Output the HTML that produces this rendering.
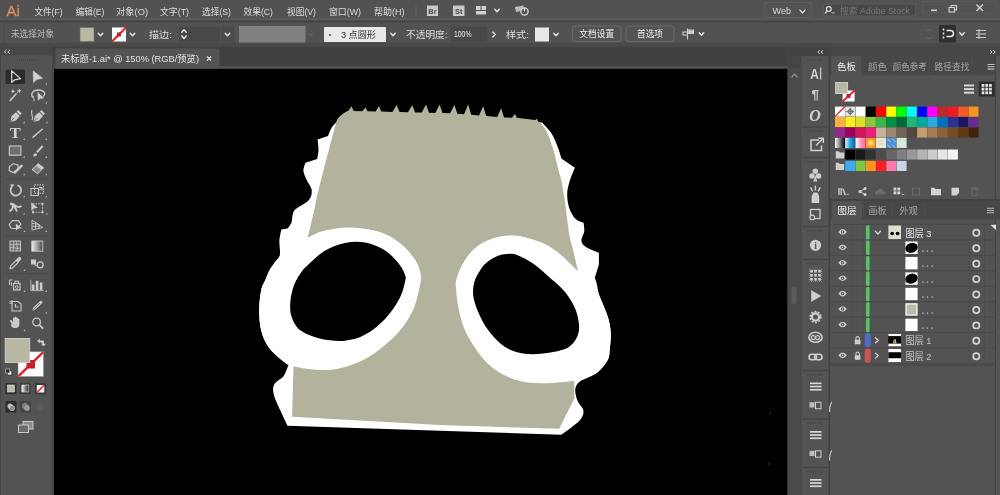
<!DOCTYPE html>
<html><head><meta charset="utf-8"><title>Illustrator</title>
<style>
html,body{margin:0;padding:0;background:#535353;overflow:hidden}
svg{display:block;will-change:transform}
text{font-family:"Liberation Sans", "Noto Sans CJK SC", sans-serif;}
</style></head><body>
<svg width="1000" height="495" viewBox="0 0 1000 495">
<rect x="0" y="0" width="1000" height="495" fill="#535353"/>
<rect x="54" y="68.4" width="733.7" height="427" fill="#000"/>
<path d="M340.0,120.0 C339.1,120.7 336.0,122.5 334.5,124.0 C333.0,125.5 332.1,127.0 331.0,129.0 C329.9,131.0 328.5,134.8 328.0,136.0 L317.6,139.5 C317.8,141.2 318.6,146.8 318.5,150.0 C318.4,153.2 317.4,157.5 317.2,159.0 L305.5,162.7 C305.1,164.0 303.2,167.9 303.4,170.8 C303.6,173.7 305.3,176.8 306.7,180.0 C308.1,183.2 311.4,186.6 311.7,190.0 C312.0,193.4 311.6,196.8 308.7,200.2 C305.8,203.6 297.4,206.6 294.5,210.3 C291.6,214.0 292.7,219.4 291.5,222.4 C290.3,225.4 288.2,227.5 287.5,228.5 L281.4,229.5 C281.1,231.3 279.7,236.0 279.4,240.6 C279.1,245.2 280.9,252.1 279.4,256.8 C277.9,261.5 272.6,265.0 270.3,268.9 C268.0,272.8 266.8,276.4 265.3,280.0 C263.8,283.6 262.2,285.1 261.2,290.2 C260.2,295.3 259.2,303.7 259.2,310.4 C259.2,317.1 259.7,324.5 261.2,330.6 C262.7,336.7 265.1,342.1 268.3,346.8 C271.5,351.5 277.0,355.9 280.4,358.9 C283.8,361.9 287.1,364.0 288.5,365.0 C287.6,366.9 285.8,373.1 283.4,376.3 C281.0,379.5 275.9,381.3 274.3,384.3 C272.7,387.3 272.8,390.0 273.8,394.4 C274.8,398.8 278.1,405.4 280.4,410.6 C282.7,415.8 286.3,423.3 287.5,425.8 L440.0,430.8 L561.2,434.8 C564.2,432.4 575.7,424.7 579.4,420.7 C583.1,416.7 583.7,414.0 583.4,410.6 C583.1,407.2 578.7,404.2 577.4,400.5 C576.1,396.8 574.7,391.8 575.4,388.4 C576.1,385.0 577.7,383.0 581.4,380.3 C585.1,377.6 593.2,375.6 597.6,372.2 C602.0,368.8 605.7,363.8 607.7,360.1 C609.7,356.4 609.2,354.6 609.7,350.0 C610.2,345.4 611.0,338.2 610.7,332.6 C610.4,327.0 609.6,322.6 607.7,316.5 C605.9,310.4 601.8,302.0 599.6,296.3 C597.4,290.6 595.0,286.4 594.5,282.4 C594.0,278.3 595.9,275.0 596.6,272.0 C597.3,269.0 598.4,267.4 598.8,264.2 C599.2,261.0 598.8,254.6 598.8,252.7 C596.6,251.7 588.4,248.7 585.5,246.7 C582.6,244.7 581.6,243.1 581.4,240.6 C581.2,238.1 583.8,234.5 584.2,231.5 C584.6,228.5 583.7,224.2 583.6,222.8 C582.2,222.1 577.8,221.3 575.4,218.8 C573.0,216.3 570.6,212.1 569.2,208.0 C567.8,203.9 567.1,198.5 567.2,194.0 C567.3,189.5 568.5,185.2 569.8,180.8 C571.1,176.4 574.0,170.0 574.8,167.8 L561.4,158.6 C561.0,157.2 559.9,153.1 559.0,150.5 C558.1,147.9 557.2,145.4 556.2,143.0 C555.2,140.6 554.2,138.2 553.0,136.0 C551.8,133.8 550.8,132.3 549.0,130.0 C547.2,127.7 543.2,123.7 542.0,122.4 L340.0,120.0Z" fill="#fff"/>
<path d="M335.5,124.5 C335.8,123.6 336.4,120.7 337.5,119.0 C338.6,117.3 340.5,115.7 342.0,114.5 C343.5,113.3 345.8,112.1 346.5,111.6 L348.4,110.8 L351.6,106.2 L353.6,111.0 L362.3,111.2 L365.5,107.6 L367.5,111.3 L375.6,111.5 L379.0,106.0 L381.2,111.6 L392.4,111.9 L396.6,105.0 L399.6,112.1 L408.0,112.3 L412.2,105.2 L415.2,112.5 L421.8,112.6 L426.0,104.4 L429.0,112.8 L435.4,112.9 L439.6,104.6 L442.6,113.1 L450.2,113.3 L454.4,105.0 L457.4,113.8 L464.0,114.3 L468.2,104.4 L471.2,114.8 L479.0,115.4 L483.2,106.2 L486.2,116.1 L497.2,117.0 L501.2,108.2 L504.0,117.4 L512.0,117.7 L515.0,114.0 L516.8,117.8 L535.0,120.1 L537.2,118.8 L538.2,122.0 L539.5,121.5 C540.1,122.3 541.9,124.3 543.4,126.6 C544.9,128.9 546.7,131.4 548.4,135.4 C550.1,139.4 551.9,144.7 553.6,150.6 C555.3,156.5 557.3,165.8 558.6,170.8 C559.9,175.8 560.3,175.2 561.4,180.8 C562.5,186.4 564.0,195.2 565.3,204.2 C566.6,213.1 568.0,226.8 569.3,234.5 C570.6,242.2 571.9,245.0 573.3,250.7 C574.6,256.4 576.7,265.9 577.4,268.9 L590.0,300.0 L595.0,335.0 L590.0,365.0 L574.3,380.3 L574.3,398.5 L559.2,428.8 L440.0,425.0 L292.1,416.7 L293.5,366.2 L280.0,350.0 L275.0,300.0 L295.0,250.0 L307.7,237.6 C308.9,232.7 312.9,216.2 314.7,208.3 C316.5,200.4 315.1,204.0 318.6,190.0 C322.1,176.0 332.7,135.4 335.5,124.5Z" fill="#b2b29d"/>
<path d="M307.7,237.6 C313.3,235.2 317.6,232.2 324.8,230.5 C332.0,228.8 341.6,227.2 351.0,227.5 C360.4,227.8 373.0,229.7 381.4,232.5 C389.8,235.3 395.9,239.9 401.6,244.6 C407.3,249.3 412.6,255.7 415.8,260.8 C419.0,265.9 420.1,270.8 420.8,275.0 C421.5,279.2 421.0,280.6 419.8,286.2 C418.6,291.8 416.7,301.3 413.7,308.4 C410.7,315.5 406.3,322.6 401.6,328.6 C396.9,334.7 391.6,339.6 385.5,344.7 C379.4,349.8 372.7,355.0 365.3,358.9 C357.9,362.8 348.4,366.1 341.0,368.0 C333.6,369.9 328.7,370.3 320.8,370.0 C312.9,369.7 300.2,368.1 293.5,366.2 C286.8,364.3 284.6,362.1 280.4,358.9 C276.2,355.7 271.5,351.5 268.3,346.8 C265.1,342.1 262.7,336.7 261.2,330.6 C259.7,324.5 259.2,317.1 259.2,310.4 C259.2,303.7 260.2,295.3 261.2,290.2 C262.2,285.1 263.8,283.6 265.3,280.0 C266.8,276.4 268.0,272.8 270.3,268.9 C272.6,265.0 275.9,260.8 279.4,256.8 C282.8,252.8 286.3,248.2 291.0,245.0 C295.7,241.8 302.1,240.0 307.7,237.6Z" fill="#fff"/>
<path d="M456.2,280.0 C457.2,275.8 459.2,270.0 462.2,264.8 C465.2,259.6 469.2,253.1 474.3,248.7 C479.4,244.3 485.8,240.8 492.5,238.6 C499.2,236.4 507.6,235.3 514.7,235.6 C521.8,235.9 529.4,238.6 535.0,240.3 C540.6,242.0 544.2,243.6 548.5,246.0 C552.8,248.4 556.6,251.2 560.6,254.5 C564.6,257.8 569.5,263.1 572.7,266.0 C575.9,268.9 576.5,270.2 580.0,272.0 C583.5,273.8 590.7,272.9 594.0,277.0 C597.3,281.1 597.3,289.7 599.6,296.3 C601.9,302.9 605.9,310.4 607.7,316.5 C609.6,322.6 610.4,327.0 610.7,332.6 C611.0,338.2 610.2,345.4 609.7,350.0 C609.2,354.6 609.7,356.4 607.7,360.1 C605.7,363.8 602.0,368.8 597.6,372.2 C593.2,375.6 585.3,378.9 581.4,380.3 C577.5,381.7 577.7,380.5 574.3,380.8 C570.9,381.1 566.8,381.9 561.2,382.3 C555.7,382.7 547.7,383.5 541.0,383.3 C534.3,383.1 527.2,382.8 520.8,381.3 C514.4,379.8 508.3,377.3 502.6,374.2 C496.9,371.1 491.2,367.1 486.5,362.5 C481.8,357.9 478.0,352.4 474.3,346.8 C470.6,341.2 466.9,335.3 464.2,328.6 C461.5,321.9 459.5,312.8 458.2,306.4 C456.9,300.0 456.5,294.4 456.2,290.0 C455.9,285.6 455.2,284.2 456.2,280.0Z" fill="#fff"/>
<path d="M301.8,271.5 C304.2,268.2 304.9,267.7 308.7,264.2 C312.5,260.7 318.8,254.2 324.8,250.7 C330.9,247.2 338.2,244.3 345.0,243.0 C351.8,241.7 358.6,241.3 365.3,242.6 C372.1,243.9 379.8,247.0 385.5,250.7 C391.2,254.4 396.4,260.8 399.6,264.8 C402.9,268.9 404.1,272.3 405.0,275.0 C405.9,277.7 406.1,277.1 405.2,281.0 C404.3,284.9 402.9,292.1 399.6,298.3 C396.3,304.6 391.2,312.4 385.5,318.5 C379.8,324.6 372.1,330.9 365.3,334.6 C358.6,338.3 352.4,340.0 345.0,340.7 C337.6,341.4 328.2,340.4 320.8,338.7 C313.4,337.0 305.5,334.3 300.6,330.6 C295.7,326.9 293.2,321.6 291.5,316.5 C289.8,311.4 290.0,305.7 290.5,300.3 C291.0,294.9 292.6,288.8 294.5,284.0 C296.4,279.2 299.4,274.8 301.8,271.5Z" fill="#000"/>
<path d="M480.4,270.0 C482.4,266.8 483.4,265.2 486.4,262.8 C489.4,260.4 494.3,257.1 498.6,255.6 C502.9,254.1 507.7,253.4 512.0,253.8 C516.3,254.2 520.1,256.2 524.2,258.2 C528.3,260.2 532.4,263.0 536.4,266.0 C540.4,269.0 544.5,272.8 548.5,276.4 C552.5,279.9 557.0,283.5 560.6,287.3 C564.2,291.1 567.2,294.5 570.0,299.0 C572.8,303.5 575.8,308.8 577.2,314.4 C578.6,320.0 579.9,327.2 578.6,332.6 C577.3,338.0 574.2,343.4 569.3,346.8 C564.4,350.2 556.4,351.6 549.0,352.8 C541.6,354.0 532.2,354.8 524.8,353.8 C517.4,352.8 510.7,350.7 504.6,346.8 C498.6,342.9 492.9,336.3 488.5,330.6 C484.1,324.9 480.9,318.1 478.4,312.4 C475.9,306.7 474.0,301.4 473.3,296.3 C472.6,291.2 473.1,286.4 474.3,282.0 C475.5,277.6 478.4,273.2 480.4,270.0Z" fill="#000"/>
<rect x="0.00" y="0.00" width="1000.00" height="22.00" fill="#525252" />
<rect x="0.00" y="17.60" width="1000.00" height="2.60" fill="#585858" />
<rect x="0.00" y="20.80" width="1000.00" height="1.80" fill="#444444" />
<text x="6.60" y="15.50" font-size="15.40" fill="#dc8c56" text-anchor="start" textLength="13.2" lengthAdjust="spacingAndGlyphs" stroke="#dc8c56" stroke-width="0.35">Ai</text>
<text x="34.50" y="14.60" font-size="9.60" fill="#dcdcdc" text-anchor="start" textLength="28.0" lengthAdjust="spacingAndGlyphs">文件(F)</text>
<text x="75.70" y="14.60" font-size="9.60" fill="#dcdcdc" text-anchor="start" textLength="28.8" lengthAdjust="spacingAndGlyphs">编辑(E)</text>
<text x="116.00" y="14.60" font-size="9.60" fill="#dcdcdc" text-anchor="start" textLength="32.0" lengthAdjust="spacingAndGlyphs">对象(O)</text>
<text x="160.00" y="14.60" font-size="9.60" fill="#dcdcdc" text-anchor="start" textLength="29.0" lengthAdjust="spacingAndGlyphs">文字(T)</text>
<text x="202.00" y="14.60" font-size="9.60" fill="#dcdcdc" text-anchor="start" textLength="29.0" lengthAdjust="spacingAndGlyphs">选择(S)</text>
<text x="243.50" y="14.60" font-size="9.60" fill="#dcdcdc" text-anchor="start" textLength="29.5" lengthAdjust="spacingAndGlyphs">效果(C)</text>
<text x="287.00" y="14.60" font-size="9.60" fill="#dcdcdc" text-anchor="start" textLength="29.0" lengthAdjust="spacingAndGlyphs">视图(V)</text>
<text x="329.00" y="14.60" font-size="9.60" fill="#dcdcdc" text-anchor="start" textLength="32.0" lengthAdjust="spacingAndGlyphs">窗口(W)</text>
<text x="374.00" y="14.60" font-size="9.60" fill="#dcdcdc" text-anchor="start" textLength="30.5" lengthAdjust="spacingAndGlyphs">帮助(H)</text>
<line x1="416.00" y1="4.00" x2="416.00" y2="17.00" stroke="#5e5e5e" stroke-width="1.00" />
<rect x="427.00" y="5.50" width="11.00" height="10.50" fill="#c9c9c9" />
<text x="432.50" y="14.00" font-size="7.50" fill="#4a4a4a" text-anchor="middle" font-weight="bold">Br</text>
<rect x="453.00" y="5.50" width="11.50" height="10.50" fill="#c9c9c9" />
<text x="458.80" y="14.00" font-size="7.50" fill="#4a4a4a" text-anchor="middle" font-weight="bold">St</text>
<rect x="476.00" y="6.00" width="4.50" height="4.00" fill="#d0d0d0" />
<rect x="481.50" y="6.00" width="4.50" height="4.00" fill="#d0d0d0" />
<rect x="476.00" y="11.00" width="10.00" height="3.50" fill="#d0d0d0" />
<path d="M494.75,9.25 L497.00,11.75 L499.25,9.25" fill="none" stroke="#e6e6e6" stroke-width="1.40" stroke-linecap="round" stroke-linejoin="round"/>
<path d="M515,7 L524,5.5 L521,11 L516,12 Z" fill="#bdbdbd" stroke="none" stroke-width="1.00" />
<circle cx="524.5" cy="11.5" r="3.6" fill="none" stroke="#e0e0e0" stroke-width="1.3"/>
<line x1="524.50" y1="8.00" x2="524.50" y2="11.50" stroke="#e0e0e0" stroke-width="1.30" />
<rect x="765.00" y="2.50" width="46.00" height="15.00" fill="none" stroke="#5f5f5f" stroke-width="1"/>
<text x="772.50" y="14.00" font-size="9.80" fill="#dcdcdc" text-anchor="start" textLength="18.5" lengthAdjust="spacingAndGlyphs">Web</text>
<path d="M800.00,10.10 L802.50,12.90 L805.00,10.10" fill="none" stroke="#e6e6e6" stroke-width="1.40" stroke-linecap="round" stroke-linejoin="round"/>
<rect x="823.50" y="4.00" width="92.00" height="12.00" fill="#484848" rx="2" stroke="#606060" stroke-width="0.8"/>
<circle cx="828.8" cy="9" r="2.4" fill="none" stroke="#dcdcdc" stroke-width="1.2"/>
<line x1="827.00" y1="11.00" x2="825.00" y2="13.50" stroke="#dcdcdc" stroke-width="1.30" />
<path d="M831.5,12 l1.5,1.5 l1.5,-1.5" fill="none" stroke="#dcdcdc" stroke-width="0.90" />
<text x="840.00" y="13.50" font-size="8.80" fill="#777" text-anchor="start" textLength="70" lengthAdjust="spacingAndGlyphs">搜索 Adobe Stock</text>
<rect x="922.50" y="1.50" width="74.00" height="11.50" fill="none" stroke="#5a5a5a" stroke-width="0.8"/>
<rect x="931.00" y="9.50" width="6.00" height="1.60" fill="#cfcfcf" />
<rect x="951.00" y="5.50" width="5.50" height="4.50" fill="none" stroke="#cfcfcf" stroke-width="1.1"/>
<rect x="949.00" y="7.50" width="5.50" height="4.50" fill="#505050" stroke="#cfcfcf" stroke-width="1.1"/>
<path d="M976.5,4.5 L983,11 M983,4.5 L976.5,11" fill="none" stroke="#d8d8d8" stroke-width="1.40" />
<rect x="0.00" y="22.60" width="1000.00" height="25.00" fill="#525252" />
<rect x="0.00" y="43.00" width="1000.00" height="4.00" fill="#494949" />
<rect x="3.00" y="26.00" width="1.50" height="1.00" fill="#474747" />
<rect x="3.00" y="28.20" width="1.50" height="1.00" fill="#474747" />
<rect x="3.00" y="30.40" width="1.50" height="1.00" fill="#474747" />
<rect x="3.00" y="32.60" width="1.50" height="1.00" fill="#474747" />
<rect x="3.00" y="34.80" width="1.50" height="1.00" fill="#474747" />
<rect x="3.00" y="37.00" width="1.50" height="1.00" fill="#474747" />
<rect x="3.00" y="39.20" width="1.50" height="1.00" fill="#474747" />
<rect x="3.00" y="41.40" width="1.50" height="1.00" fill="#474747" />
<text x="11.00" y="37.30" font-size="9.40" fill="#b9b9b9" text-anchor="start" textLength="43" lengthAdjust="spacingAndGlyphs">未选择对象</text>
<rect x="80.00" y="27.50" width="14.00" height="14.00" fill="#b9b9a3" stroke="#6a6a6a" stroke-width="0.6"/>
<path d="M98.25,33.20 L100.50,35.80 L102.75,33.20" fill="none" stroke="#e6e6e6" stroke-width="1.40" stroke-linecap="round" stroke-linejoin="round"/>
<rect x="112.00" y="27.50" width="14.00" height="14.00" fill="#fff" />
<line x1="112.00" y1="41.50" x2="126.00" y2="27.50" stroke="#e0202a" stroke-width="2.20"/>
<rect x="117.00" y="32.50" width="4.00" height="4.00" fill="#c0202a" />
<path d="M130.25,33.20 L132.50,35.80 L134.75,33.20" fill="none" stroke="#e6e6e6" stroke-width="1.40" stroke-linecap="round" stroke-linejoin="round"/>
<text x="149.00" y="37.50" font-size="9.40" fill="#dcdcdc" text-anchor="start" textLength="23" lengthAdjust="spacingAndGlyphs">描边:</text>
<rect x="179.00" y="26.50" width="41.00" height="16.00" fill="#484848" rx="1.5"/>
<path d="M181.75,36.00 L184.00,38.40 L186.25,36.00" fill="none" stroke="#e6e6e6" stroke-width="1.40" stroke-linecap="round" stroke-linejoin="round"/>
<path d="M181.75,32.2 L184,29.8 L186.25,32.2" fill="none" stroke="#e6e6e6" stroke-width="1.40" stroke-linecap="round" stroke-linejoin="round"/>
<rect x="221.00" y="26.50" width="13.50" height="16.00" fill="#4b4b4b" rx="1.5"/>
<path d="M225.25,33.20 L227.50,35.80 L229.75,33.20" fill="none" stroke="#e6e6e6" stroke-width="1.40" stroke-linecap="round" stroke-linejoin="round"/>
<rect x="239.00" y="26.00" width="66.50" height="16.50" fill="#818181" />
<path d="M309.25,33.50 L311.00,35.50 L312.75,33.50" fill="none" stroke="#6a6a6a" stroke-width="1.00" stroke-linecap="round" stroke-linejoin="round"/>
<rect x="324.00" y="27.00" width="62.00" height="15.00" fill="#e9e9e9" rx="1"/>
<circle cx="330" cy="35" r="0.9" fill="#333"/>
<text x="341.00" y="38.30" font-size="9.00" fill="#333" text-anchor="start" textLength="35" lengthAdjust="spacingAndGlyphs">3 点圆形</text>
<path d="M390.75,33.20 L393.00,35.80 L395.25,33.20" fill="none" stroke="#e6e6e6" stroke-width="1.40" stroke-linecap="round" stroke-linejoin="round"/>
<text x="406.00" y="37.50" font-size="9.40" fill="#dcdcdc" text-anchor="start" textLength="41.5" lengthAdjust="spacingAndGlyphs">不透明度:</text>
<rect x="451.00" y="26.50" width="36.50" height="16.00" fill="#484848" rx="1.5"/>
<text x="454.00" y="37.30" font-size="8.80" fill="#e8e8e8" text-anchor="start" textLength="17.5" lengthAdjust="spacingAndGlyphs">100%</text>
<path d="M492.70,32.10 L495.30,34.50 L492.70,36.90" fill="none" stroke="#e6e6e6" stroke-width="1.40" stroke-linecap="round" stroke-linejoin="round"/>
<text x="506.00" y="37.50" font-size="9.40" fill="#dcdcdc" text-anchor="start" textLength="23" lengthAdjust="spacingAndGlyphs">样式:</text>
<rect x="535.00" y="27.50" width="14.00" height="14.00" fill="#e8e8e8" />
<path d="M553.75,33.20 L556.00,35.80 L558.25,33.20" fill="none" stroke="#e6e6e6" stroke-width="1.40" stroke-linecap="round" stroke-linejoin="round"/>
<rect x="572.50" y="26.00" width="48.50" height="15.50" fill="#535353" rx="2.5" stroke="#6c6c6c" stroke-width="0.9"/>
<text x="596.70" y="37.20" font-size="9.20" fill="#ececec" text-anchor="middle" textLength="35" lengthAdjust="spacingAndGlyphs">文档设置</text>
<rect x="626.00" y="26.00" width="48.00" height="15.50" fill="#535353" rx="2.5" stroke="#6c6c6c" stroke-width="0.9"/>
<text x="650.00" y="37.20" font-size="9.20" fill="#ececec" text-anchor="middle" textLength="26" lengthAdjust="spacingAndGlyphs">首选项</text>
<path d="M687.5,28.5 v11 M683,32 h4.5 v3 h-4.5z M688,30 h5.5 v3.5 h-5.5z" fill="none" stroke="#d0d0d0" stroke-width="1.10" />
<rect x="688.50" y="30.50" width="4.50" height="3.00" fill="#d0d0d0" />
<path d="M699.25,32.70 L701.50,35.30 L703.75,32.70" fill="none" stroke="#e6e6e6" stroke-width="1.40" stroke-linecap="round" stroke-linejoin="round"/>
<path d="M926,31 l3,-2 M926,37 l3,2 M932,31 l-3,-2 M932,37 l-3,2" fill="none" stroke="#686868" stroke-width="1.00" />
<rect x="939.00" y="25.00" width="17.00" height="17.50" fill="#2f2f2f" rx="1.5"/>
<path d="M943.5,28.5 v2 M943.5,32.5 v2 M943.5,36.5 v2" fill="none" stroke="#eaeaea" stroke-width="1.60" />
<path d="M946.5,30.5 h4 a3,3 0 0 1 0,6 h-4" fill="none" stroke="#eaeaea" stroke-width="1.50" />
<path d="M959.75,32.70 L962.00,35.30 L964.25,32.70" fill="none" stroke="#e6e6e6" stroke-width="1.40" stroke-linecap="round" stroke-linejoin="round"/>
<path d="M976,30.5 h10 M976,34 h10 M976,37.5 h10" fill="none" stroke="#c8c8c8" stroke-width="1.20" />
<path d="M979,29 v10" fill="none" stroke="#c8c8c8" stroke-width="1.00" />
<rect x="0.00" y="46.80" width="1000.00" height="21.60" fill="#414141" />
<rect x="0.00" y="66.20" width="1000.00" height="2.20" fill="#545454" />
<rect x="55.50" y="48.50" width="164.00" height="20.00" fill="#535353" />
<text x="61.00" y="62.00" font-size="9.40" fill="#e4e4e4" text-anchor="start" textLength="138" lengthAdjust="spacingAndGlyphs">未标题-1.ai* @ 150% (RGB/预览)</text>
<path d="M207,56.5 l4,4 M211,56.5 l-4,4" fill="none" stroke="#dedede" stroke-width="1.20" />
<rect x="0.00" y="47.50" width="53.00" height="447.50" fill="#535353" />
<rect x="0.00" y="47.50" width="53.00" height="8.00" fill="#474747" />
<rect x="0.00" y="47.50" width="1.00" height="447.50" fill="#454545" />
<rect x="52.00" y="47.50" width="2.00" height="447.50" fill="#444444" />
<path d="M6.5,50 l-2,1.8 l2,1.8 M9.8,50 l-2,1.8 l2,1.8" fill="none" stroke="#d0d0d0" stroke-width="1.00" />
<rect x="17.00" y="59.50" width="1.00" height="1.60" fill="#434343" />
<rect x="19.00" y="59.50" width="1.00" height="1.60" fill="#434343" />
<rect x="21.00" y="59.50" width="1.00" height="1.60" fill="#434343" />
<rect x="23.00" y="59.50" width="1.00" height="1.60" fill="#434343" />
<rect x="25.00" y="59.50" width="1.00" height="1.60" fill="#434343" />
<rect x="27.00" y="59.50" width="1.00" height="1.60" fill="#434343" />
<rect x="29.00" y="59.50" width="1.00" height="1.60" fill="#434343" />
<rect x="31.00" y="59.50" width="1.00" height="1.60" fill="#434343" />
<rect x="33.00" y="59.50" width="1.00" height="1.60" fill="#434343" />
<rect x="35.00" y="59.50" width="1.00" height="1.60" fill="#434343" />
<rect x="5.50" y="69.50" width="19.50" height="14.50" fill="#2c2c2c" rx="1.5"/>
<path d="M11.5,70.8 L11.8,82.4 L14.6,79.8 L20.6,78.6 Z" fill="none" stroke="#d9d9d9" stroke-width="1.20" stroke-linejoin="round"/>
<path d="M33.2,71 L33.5,82.6 L36.6,79.6 L42.6,78.2 Z" fill="#cfcfcf" stroke="#cfcfcf" stroke-width="0.60" stroke-linejoin="round"/>
<path d="M45.1,84.5 l1.8,0 l0,-1.8z" fill="#c4c4c4" stroke="none" stroke-width="1.00" />
<line x1="9.80" y1="101.00" x2="16.20" y2="93.80" stroke="#cacaca" stroke-width="1.60" />
<path d="M12.9,89.4 v3.8 M11,91.3 h3.8 M19.3,88.9 v3.8 M17.4,90.8 h3.8 M16.6,93.4 l1.6,-1.4" fill="none" stroke="#cacaca" stroke-width="1.00" />
<circle cx="12.9" cy="91.3" r="0.9" fill="#cacaca"/><circle cx="19.3" cy="90.8" r="0.9" fill="#cacaca"/>
<path d="M33.5,97.5 C30,95 32,90.4 38,90 C44.5,89.8 46.5,94.5 43,96.5" fill="none" stroke="#cacaca" stroke-width="1.30" />
<path d="M33.6,96.4 c-1.2,1.6 1.4,2.6 0.2,5" fill="none" stroke="#cacaca" stroke-width="1.00" />
<path d="M37.6,91.8 L37.8,101 L40,98.8 L44.2,98.2 Z" fill="#cacaca" stroke="none" stroke-width="1.00" />
<path d="M45.1,103.4 l1.8,0 l0,-1.8z" fill="#c4c4c4" stroke="none" stroke-width="1.00" />
<path d="M10.3,122 L11.5,116 L16,112.2 L19.8,116 L16,120.6 Z" fill="#cacaca" stroke="none" stroke-width="1.00" />
<path d="M16.6,111.6 l1.6,-1.6 l3.6,3.6 l-1.6,1.6z" fill="#cacaca" stroke="none" stroke-width="1.00" />
<path d="M10.3,122 L14,118" fill="none" stroke="#535353" stroke-width="0.80" />
<path d="M22.9,123.2 l1.8,0 l0,-1.8z" fill="#c4c4c4" stroke="none" stroke-width="1.00" />
<path d="M33.5,122 L34.7,116 L39.2,112.2 L43,116 L39.2,120.6 Z" fill="#cacaca" stroke="none" stroke-width="1.00" />
<path d="M39.8,111.6 l1.6,-1.6 l3.6,3.6 l-1.6,1.6z" fill="#cacaca" stroke="none" stroke-width="1.00" />
<path d="M33.5,122 L37.2,118" fill="none" stroke="#535353" stroke-width="0.80" />
<path d="M32,110 c-2,4 2,6 0,10" fill="none" stroke="#cacaca" stroke-width="1.10" />
<path d="M45.6,123.2 l1.8,0 l0,-1.8z" fill="#c4c4c4" stroke="none" stroke-width="1.00" />
<text x="15.20" y="138.00" font-size="14.50" fill="#d4d4d4" text-anchor="middle" font-weight="bold" textLength="11" lengthAdjust="spacingAndGlyphs" style="font-family:'Liberation Serif',serif">T</text>
<path d="M22.9,140.1 l1.8,0 l0,-1.8z" fill="#c4c4c4" stroke="none" stroke-width="1.00" />
<line x1="32.60" y1="137.60" x2="42.80" y2="128.80" stroke="#cacaca" stroke-width="1.40" />
<path d="M45.1,140.1 l1.8,0 l0,-1.8z" fill="#c4c4c4" stroke="none" stroke-width="1.00" />
<rect x="9.30" y="146.00" width="11.60" height="9.20" fill="#707070" stroke="#cacaca" stroke-width="1.1"/>
<path d="M22.9,157.9 l1.8,0 l0,-1.8z" fill="#c4c4c4" stroke="none" stroke-width="1.00" />
<path d="M33.2,156.4 c0.2,-2 1,-3 2.4,-3.4 l1.6,1.6 c-0.6,1.4 -2,2 -4,1.8z" fill="#cacaca" stroke="none" stroke-width="1.00" />
<line x1="36.80" y1="152.40" x2="42.60" y2="146.00" stroke="#cacaca" stroke-width="2.00" />
<path d="M45.1,157.9 l1.8,0 l0,-1.8z" fill="#c4c4c4" stroke="none" stroke-width="1.00" />
<path d="M9.2,167 l4,-3.4 l5,1.6 l-0.4,4.6 l-4.6,2.8 l-4,-2z" fill="none" stroke="#cacaca" stroke-width="1.10" />
<line x1="14.00" y1="173.20" x2="22.40" y2="165.20" stroke="#cacaca" stroke-width="2.40" />
<path d="M22.9,175.3 l1.8,0 l0,-1.8z" fill="#c4c4c4" stroke="none" stroke-width="1.00" />
<path d="M32,169.6 l6.2,-6 l5.4,4.2 l-6,6z" fill="#8a8a8a" stroke="#cacaca" stroke-width="1.00" />
<path d="M38.2,163.6 l5.4,4.2 l-2.2,2.2 l-5.4,-4.2z" fill="#cacaca" stroke="none" stroke-width="1.00" />
<path d="M45.1,175.3 l1.8,0 l0,-1.8z" fill="#c4c4c4" stroke="none" stroke-width="1.00" />
<line x1="5.00" y1="179.00" x2="49.00" y2="179.00" stroke="#4a4a4a" stroke-width="1.00" />
<path d="M12.2,186.4 A5.3,5.3 0 1 0 17.5,185.2" fill="none" stroke="#cacaca" stroke-width="1.70" />
<path d="M10.4,184.2 l4,0.2 l-2.6,3.4z" fill="#cacaca" stroke="none" stroke-width="1.00" />
<path d="M22.9,197.3 l1.8,0 l0,-1.8z" fill="#c4c4c4" stroke="none" stroke-width="1.00" />
<rect x="31.00" y="188.50" width="7.50" height="7.00" fill="none" stroke="#cacaca" stroke-width="1"/>
<rect x="34.50" y="184.80" width="9.00" height="8.50" fill="none" stroke="#cacaca" stroke-width="1" stroke-dasharray="1.5,1"/>
<path d="M38,191.5 L42,187.5 M42,190.5 v-3 h-3" fill="none" stroke="#cacaca" stroke-width="1.00" />
<path d="M45.1,197.3 l1.8,0 l0,-1.8z" fill="#c4c4c4" stroke="none" stroke-width="1.00" />
<path d="M9.5,211 c3,-1 4,-4 3,-7 c3,1 5,5 9,2 M10,203.5 c3,1 5,3 7,8" fill="none" stroke="#cacaca" stroke-width="1.90" />
<path d="M22.9,214.5 l1.8,0 l0,-1.8z" fill="#c4c4c4" stroke="none" stroke-width="1.00" />
<rect x="33.00" y="203.80" width="9.50" height="8.50" fill="none" stroke="#cacaca" stroke-width="0.9" stroke-dasharray="1.6,1"/>
<path d="M31.2,202.3 L31.4,210.8 L33.8,208.6 L38,207.8 Z" fill="#cacaca" stroke="none" stroke-width="1.00" />
<rect x="41.50" y="202.80" width="2.00" height="2.00" fill="#cacaca" />
<rect x="41.50" y="211.30" width="2.00" height="2.00" fill="#cacaca" />
<rect x="32.00" y="211.30" width="2.00" height="2.00" fill="#cacaca" />
<path d="M45.6,214.5 l1.8,0 l0,-1.8z" fill="#c4c4c4" stroke="none" stroke-width="1.00" />
<path d="M9.2,224.5 l3.4,-4 l6,0.4 l2.4,3.2 l-4,4.6 l-6,-0.4z" fill="none" stroke="#cacaca" stroke-width="1.10" />
<path d="M15.8,223.4 L16,230.6 L18,228.8 L21.8,228.2 Z" fill="#cacaca" stroke="none" stroke-width="1.00" />
<path d="M23.4,232.1 l1.8,0 l0,-1.8z" fill="#c4c4c4" stroke="none" stroke-width="1.00" />
<path d="M32,220 L32,230 L42.8,227.5 Z M32,223.3 L38,224.2 M32,226.6 L40,226 M35.6,221.8 V229.2 M39,224 V228.4" fill="none" stroke="#cacaca" stroke-width="0.90" />
<path d="M45.1,232.1 l1.8,0 l0,-1.8z" fill="#c4c4c4" stroke="none" stroke-width="1.00" />
<line x1="5.00" y1="236.00" x2="49.00" y2="236.00" stroke="#4a4a4a" stroke-width="1.00" />
<rect x="10.00" y="241.00" width="10.60" height="10.00" fill="#6c6c6c" stroke="#cacaca" stroke-width="0.9"/>
<path d="M10,244.5 c3,1.4 7,-1.4 10.6,0 M10,248 c3,-1.4 7,1.4 10.6,0 M13.5,241 c1.4,3 -1.4,7 0,10 M17,241 c-1.4,3 1.4,7 0,10" fill="none" stroke="#cacaca" stroke-width="0.80" />
<linearGradient id="gt" x1="0" x2="1" y1="0" y2="0"><stop offset="0" stop-color="#efefef"/><stop offset="1" stop-color="#4a4a4a"/></linearGradient>
<rect x="31.80" y="241.00" width="11.00" height="10.20" fill="url(#gt)" stroke="#cacaca" stroke-width="0.9"/>
<path d="M10,268.6 l0.6,-2.6 l5.6,-5.6 l2,2 l-5.6,5.6z" fill="none" stroke="#cacaca" stroke-width="1.10" />
<path d="M16,259.6 l2.4,-2.2 a1.6,1.6 0 0 1 2.4,2.4 l-2.2,2.4z" fill="#cacaca" stroke="none" stroke-width="1.00" />
<path d="M23.4,270.9 l1.8,0 l0,-1.8z" fill="#c4c4c4" stroke="none" stroke-width="1.00" />
<rect x="31.00" y="259.50" width="5.00" height="5.00" fill="#cacaca" />
<circle cx="40.2" cy="264.8" r="3" fill="none" stroke="#cacaca" stroke-width="1.2"/>
<path d="M34,264.5 l4,2" fill="none" stroke="#cacaca" stroke-width="1.00" />
<line x1="5.00" y1="273.50" x2="49.00" y2="273.50" stroke="#4a4a4a" stroke-width="1.00" />
<path d="M13.5,283.5 h6.5 v6.4 h-6.5z M15,283.5 v-2.2 h3.5 v2.2" fill="none" stroke="#cacaca" stroke-width="1.10" />
<circle cx="16.8" cy="287" r="1.4" fill="none" stroke="#cacaca" stroke-width="0.9"/>
<path d="M9.5,280 h3 M9.5,280 v5 M11.5,282 v4" fill="none" stroke="#cacaca" stroke-width="1.00" />
<path d="M23.4,291.9 l1.8,0 l0,-1.8z" fill="#c4c4c4" stroke="none" stroke-width="1.00" />
<rect x="31.80" y="284.50" width="2.60" height="5.60" fill="#cacaca" />
<rect x="35.80" y="280.80" width="2.60" height="9.30" fill="#cacaca" />
<rect x="39.80" y="282.50" width="2.60" height="7.60" fill="#cacaca" />
<path d="M30.8,279.8 V290.6 H43.6" fill="none" stroke="#cacaca" stroke-width="0.80" />
<path d="M45.1,291.9 l1.8,0 l0,-1.8z" fill="#c4c4c4" stroke="none" stroke-width="1.00" />
<path d="M12,300.2 V311 H21 V304 L18,301.5 H9.5 M9.5,303.2 H13 M15.5,304 v3 h3" fill="none" stroke="#cacaca" stroke-width="1.10" />
<path d="M32,311 l1.4,-3.4 l7.4,-7 l2,2 l-7.4,7z" fill="#cacaca" stroke="none" stroke-width="1.00" />
<path d="M32,311 l8,-8" fill="none" stroke="#535353" stroke-width="0.70" />
<path d="M45.1,313.5 l1.8,0 l0,-1.8z" fill="#c4c4c4" stroke="none" stroke-width="1.00" />
<path d="M11.6,323.5 l-1.6,-2 c-0.8,-1.2 0.8,-2 1.6,-1 l1.4,1.6 v-3.8 c0,-1.2 1.6,-1.2 1.6,0 v-1 c0,-1.2 1.7,-1.2 1.7,0 v1 c0,-1.1 1.6,-1.1 1.6,0 v1.2 c0,-1 1.5,-1 1.5,0 v4.6 c0,2.6 -1.4,4 -3.8,4 c-2.6,0 -3.6,-1 -4.6,-2.4z" fill="#cacaca" stroke="none" stroke-width="1.00" />
<path d="M23.4,330.9 l1.8,0 l0,-1.8z" fill="#c4c4c4" stroke="none" stroke-width="1.00" />
<circle cx="36.6" cy="322" r="3.8" fill="none" stroke="#cacaca" stroke-width="1.3"/>
<line x1="39.40" y1="324.80" x2="43.20" y2="328.60" stroke="#cacaca" stroke-width="1.80" />
<rect x="18.00" y="351.80" width="25.50" height="24.80" fill="#fff" />
<line x1="18.00" y1="376.60" x2="43.50" y2="351.80" stroke="#e0202a" stroke-width="2.40"/>
<rect x="18.00" y="351.80" width="25.50" height="24.80" fill="none" stroke="#8a8a8a" stroke-width="0.6"/>
<rect x="26.50" y="360.00" width="8.50" height="8.50" fill="#c4202c" />
<rect x="5.20" y="338.50" width="24.60" height="24.00" fill="#b9b9a3" stroke="#d8d8d8" stroke-width="0.8"/>
<path d="M37.5,341 l2,-1.8 l0,3.6z M43.5,346 l-1.8,-2 l3.6,0z M39,341 h4.5 v3.4" fill="#cfcfcf" stroke="#cfcfcf" stroke-width="0.80" />
<rect x="7.80" y="371.00" width="4.00" height="4.00" fill="#fff" stroke="#222" stroke-width="0.6"/>
<rect x="5.80" y="369.00" width="4.00" height="4.00" fill="#222" stroke="#ddd" stroke-width="0.6"/>
<rect x="5.50" y="383.00" width="11.00" height="11.00" fill="#2e2e2e" rx="1"/>
<rect x="7.50" y="385.00" width="7.00" height="7.00" fill="#b9b9a3" stroke="#e8e8e8" stroke-width="0.6"/>
<linearGradient id="g2" x1="0" x2="1" y1="0" y2="0"><stop offset="0" stop-color="#f4f4f4"/><stop offset="1" stop-color="#222"/></linearGradient>
<rect x="19.80" y="383.00" width="11.00" height="11.00" fill="#3a3a3a" rx="1"/>
<rect x="21.80" y="385.00" width="7.00" height="7.00" fill="url(#g2)" stroke="#e8e8e8" stroke-width="0.6"/>
<rect x="34.80" y="383.00" width="11.40" height="11.40" fill="#3a3a3a" rx="1"/>
<rect x="36.80" y="385.00" width="7.50" height="7.50" fill="#fff" />
<line x1="36.80" y1="392.50" x2="44.30" y2="385.00" stroke="#e0202a" stroke-width="1.60"/>
<rect x="5.50" y="401.00" width="11.00" height="11.50" fill="#2e2e2e" rx="1"/>
<circle cx="10" cy="406" r="2.6" fill="#bbb"/><circle cx="12" cy="408" r="2.6" fill="#8a8a8a" stroke="#ddd" stroke-width="0.6"/>
<rect x="20.00" y="401.00" width="11.00" height="11.50" fill="#444444" rx="1"/>
<circle cx="25" cy="406" r="2.6" fill="#777" stroke="#aaa" stroke-width="0.6"/><circle cx="27" cy="408" r="2.6" fill="#999" stroke="#aaa" stroke-width="0.6"/>
<circle cx="40" cy="407" r="3" fill="none" stroke="#6e6e6e" stroke-width="0.8"/><circle cx="40" cy="407" r="1" fill="#6e6e6e"/>
<rect x="23.00" y="421.50" width="10.00" height="7.50" fill="#8a8a8a" stroke="#d6d6d6" stroke-width="0.9"/>
<rect x="18.50" y="425.00" width="10.00" height="7.50" fill="#6a6a6a" stroke="#d6d6d6" stroke-width="0.9"/>
<rect x="787.70" y="47.50" width="212.30" height="447.50" fill="#535353" />
<rect x="787.70" y="47.50" width="13.00" height="21.00" fill="#454545" />
<rect x="787.70" y="68.40" width="13.00" height="427.00" fill="#4a4a4a" />
<rect x="787.70" y="47.50" width="42.00" height="8.50" fill="#424242" />
<rect x="800.50" y="56.00" width="1.00" height="439.00" fill="#444444" />
<rect x="828.50" y="47.50" width="1.60" height="447.50" fill="#434343" />
<path d="M791.75,77.10 L794.50,74.10 L797.25,77.10" fill="none" stroke="#9a9a9a" stroke-width="1.20" stroke-linecap="round" stroke-linejoin="round"/>
<rect x="791.50" y="287.00" width="5.00" height="17.00" fill="#5c5c5c" rx="2.5"/>
<path d="M819.8,50.2 l-2,1.8 l2,1.8 M823,50.2 l-2,1.8 l2,1.8" fill="none" stroke="#d0d0d0" stroke-width="1.00" />
<rect x="807.00" y="59.50" width="1.00" height="1.40" fill="#434343" />
<rect x="809.00" y="59.50" width="1.00" height="1.40" fill="#434343" />
<rect x="811.00" y="59.50" width="1.00" height="1.40" fill="#434343" />
<rect x="813.00" y="59.50" width="1.00" height="1.40" fill="#434343" />
<rect x="815.00" y="59.50" width="1.00" height="1.40" fill="#434343" />
<rect x="817.00" y="59.50" width="1.00" height="1.40" fill="#434343" />
<rect x="819.00" y="59.50" width="1.00" height="1.40" fill="#434343" />
<rect x="821.00" y="59.50" width="1.00" height="1.40" fill="#434343" />
<text x="814.60" y="78.60" font-size="14.00" fill="#cfcfcf" text-anchor="middle" font-weight="bold" textLength="8.6" lengthAdjust="spacingAndGlyphs">A</text>
<line x1="820.70" y1="67.50" x2="820.70" y2="79.50" stroke="#cfcfcf" stroke-width="1.20" />
<text x="815.30" y="98.60" font-size="13.50" fill="#cfcfcf" text-anchor="middle" font-weight="bold">¶</text>
<text x="815.00" y="120.60" font-size="16.00" fill="#cfcfcf" text-anchor="middle" font-style="italic" font-weight="bold" style="font-family:'Liberation Serif',serif">O</text>
<line x1="802.00" y1="127.00" x2="828.00" y2="127.00" stroke="#454545" stroke-width="1.20" />
<rect x="807.00" y="130.50" width="1.00" height="1.40" fill="#434343" />
<rect x="809.00" y="130.50" width="1.00" height="1.40" fill="#434343" />
<rect x="811.00" y="130.50" width="1.00" height="1.40" fill="#434343" />
<rect x="813.00" y="130.50" width="1.00" height="1.40" fill="#434343" />
<rect x="815.00" y="130.50" width="1.00" height="1.40" fill="#434343" />
<rect x="817.00" y="130.50" width="1.00" height="1.40" fill="#434343" />
<rect x="819.00" y="130.50" width="1.00" height="1.40" fill="#434343" />
<rect x="821.00" y="130.50" width="1.00" height="1.40" fill="#434343" />
<path d="M819,140 h-8 v10.5 h10.5 v-5" fill="none" stroke="#cfcfcf" stroke-width="1.50" />
<path d="M816,145.5 L822.5,139 M818.5,138.3 h4.8 v4.8" fill="none" stroke="#cfcfcf" stroke-width="1.50" />
<line x1="802.00" y1="157.50" x2="828.00" y2="157.50" stroke="#454545" stroke-width="1.20" />
<rect x="807.00" y="161.00" width="1.00" height="1.40" fill="#434343" />
<rect x="809.00" y="161.00" width="1.00" height="1.40" fill="#434343" />
<rect x="811.00" y="161.00" width="1.00" height="1.40" fill="#434343" />
<rect x="813.00" y="161.00" width="1.00" height="1.40" fill="#434343" />
<rect x="815.00" y="161.00" width="1.00" height="1.40" fill="#434343" />
<rect x="817.00" y="161.00" width="1.00" height="1.40" fill="#434343" />
<rect x="819.00" y="161.00" width="1.00" height="1.40" fill="#434343" />
<rect x="821.00" y="161.00" width="1.00" height="1.40" fill="#434343" />
<circle cx="815.3" cy="171.2" r="2.7" fill="#cfcfcf"/><circle cx="812" cy="176" r="2.7" fill="#cfcfcf"/><circle cx="818.6" cy="176" r="2.7" fill="#cfcfcf"/>
<path d="M815.3,175 l-2,6.4 h4z" fill="#cfcfcf" stroke="none" stroke-width="1.00" />
<path d="M811.6,203 h7.6 v-5.5 c0,-2 -1,-3.4 -2,-5 h-3.6 c-1,1.6 -2,3 -2,5z" fill="#cfcfcf" stroke="none" stroke-width="1.00" />
<path d="M810.6,187.4 l2,4 M815.4,185.6 v5 M820.2,187.4 l-2,4" fill="none" stroke="#cfcfcf" stroke-width="1.40" />
<rect x="810.50" y="209.50" width="9.50" height="9.00" fill="none" stroke="#cfcfcf" stroke-width="1.3"/>
<circle cx="812.2" cy="217.4" r="2.3" fill="#535353" stroke="#cfcfcf" stroke-width="1.1"/>
<line x1="802.00" y1="226.50" x2="828.00" y2="226.50" stroke="#454545" stroke-width="1.20" />
<rect x="807.00" y="230.00" width="1.00" height="1.40" fill="#434343" />
<rect x="809.00" y="230.00" width="1.00" height="1.40" fill="#434343" />
<rect x="811.00" y="230.00" width="1.00" height="1.40" fill="#434343" />
<rect x="813.00" y="230.00" width="1.00" height="1.40" fill="#434343" />
<rect x="815.00" y="230.00" width="1.00" height="1.40" fill="#434343" />
<rect x="817.00" y="230.00" width="1.00" height="1.40" fill="#434343" />
<rect x="819.00" y="230.00" width="1.00" height="1.40" fill="#434343" />
<rect x="821.00" y="230.00" width="1.00" height="1.40" fill="#434343" />
<circle cx="815.5" cy="245.3" r="5.6" fill="#cfcfcf"/>
<text x="815.50" y="249.20" font-size="9.50" fill="#535353" text-anchor="middle" font-weight="bold" style="font-family:'Liberation Serif',serif">i</text>
<line x1="802.00" y1="259.50" x2="828.00" y2="259.50" stroke="#454545" stroke-width="1.20" />
<rect x="807.00" y="263.00" width="1.00" height="1.40" fill="#434343" />
<rect x="809.00" y="263.00" width="1.00" height="1.40" fill="#434343" />
<rect x="811.00" y="263.00" width="1.00" height="1.40" fill="#434343" />
<rect x="813.00" y="263.00" width="1.00" height="1.40" fill="#434343" />
<rect x="815.00" y="263.00" width="1.00" height="1.40" fill="#434343" />
<rect x="817.00" y="263.00" width="1.00" height="1.40" fill="#434343" />
<rect x="819.00" y="263.00" width="1.00" height="1.40" fill="#434343" />
<rect x="821.00" y="263.00" width="1.00" height="1.40" fill="#434343" />
<rect x="810.20" y="270.00" width="2.60" height="2.60" fill="#cfcfcf" />
<rect x="814.20" y="270.00" width="2.60" height="2.60" fill="#cfcfcf" />
<rect x="818.20" y="270.00" width="2.60" height="2.60" fill="#cfcfcf" />
<rect x="810.20" y="274.00" width="2.60" height="2.60" fill="#cfcfcf" />
<rect x="814.20" y="274.00" width="2.60" height="2.60" fill="#cfcfcf" />
<rect x="818.20" y="274.00" width="2.60" height="2.60" fill="#cfcfcf" />
<rect x="810.20" y="278.00" width="2.60" height="2.60" fill="#cfcfcf" />
<rect x="814.20" y="278.00" width="2.60" height="2.60" fill="#cfcfcf" />
<rect x="818.20" y="278.00" width="2.60" height="2.60" fill="#cfcfcf" />
<rect x="809.40" y="269.20" width="12.20" height="12.20" fill="none" stroke="#cfcfcf" stroke-width="0.5" stroke-dasharray="1,1"/>
<path d="M811.2,290.2 L821.5,296 L811.2,301.8 Z" fill="#cfcfcf" stroke="none" stroke-width="1.00" />
<circle cx="815.5" cy="317" r="3.6" fill="none" stroke="#cfcfcf" stroke-width="2.2"/>
<circle cx="815.5" cy="317" r="5.4" fill="none" stroke="#cfcfcf" stroke-width="1.6" stroke-dasharray="1.9,1.5"/>
<ellipse cx="815.5" cy="337.3" rx="6.6" ry="5" fill="none" stroke="#cfcfcf" stroke-width="1.6"/>
<circle cx="813.3" cy="337.6" r="2" fill="none" stroke="#cfcfcf" stroke-width="1.1"/><circle cx="817.6" cy="337.6" r="2" fill="none" stroke="#cfcfcf" stroke-width="1.1"/>
<rect x="809.00" y="354.20" width="7.50" height="5.60" fill="none" rx="2.8" stroke="#cfcfcf" stroke-width="1.6"/>
<rect x="814.50" y="354.20" width="7.50" height="5.60" fill="none" rx="2.8" stroke="#cfcfcf" stroke-width="1.6"/>
<line x1="802.00" y1="370.50" x2="828.00" y2="370.50" stroke="#454545" stroke-width="1.20" />
<rect x="807.00" y="374.00" width="1.00" height="1.40" fill="#434343" />
<rect x="809.00" y="374.00" width="1.00" height="1.40" fill="#434343" />
<rect x="811.00" y="374.00" width="1.00" height="1.40" fill="#434343" />
<rect x="813.00" y="374.00" width="1.00" height="1.40" fill="#434343" />
<rect x="815.00" y="374.00" width="1.00" height="1.40" fill="#434343" />
<rect x="817.00" y="374.00" width="1.00" height="1.40" fill="#434343" />
<rect x="819.00" y="374.00" width="1.00" height="1.40" fill="#434343" />
<rect x="821.00" y="374.00" width="1.00" height="1.40" fill="#434343" />
<rect x="810.00" y="382.50" width="11.50" height="1.70" fill="#d6d6d6" />
<rect x="810.00" y="385.70" width="11.50" height="1.70" fill="#d6d6d6" />
<rect x="810.00" y="388.90" width="11.50" height="1.70" fill="#d6d6d6" />
<rect x="809.50" y="402.30" width="5.00" height="5.20" fill="#bdbdbd" />
<rect x="815.50" y="402.30" width="5.50" height="6.40" fill="none" stroke="#d0d0d0" stroke-width="1"/>
<line x1="802.00" y1="419.00" x2="828.00" y2="419.00" stroke="#454545" stroke-width="1.20" />
<rect x="807.00" y="422.50" width="1.00" height="1.40" fill="#434343" />
<rect x="809.00" y="422.50" width="1.00" height="1.40" fill="#434343" />
<rect x="811.00" y="422.50" width="1.00" height="1.40" fill="#434343" />
<rect x="813.00" y="422.50" width="1.00" height="1.40" fill="#434343" />
<rect x="815.00" y="422.50" width="1.00" height="1.40" fill="#434343" />
<rect x="817.00" y="422.50" width="1.00" height="1.40" fill="#434343" />
<rect x="819.00" y="422.50" width="1.00" height="1.40" fill="#434343" />
<rect x="821.00" y="422.50" width="1.00" height="1.40" fill="#434343" />
<rect x="810.00" y="431.00" width="11.50" height="1.70" fill="#d6d6d6" />
<rect x="810.00" y="434.20" width="11.50" height="1.70" fill="#d6d6d6" />
<rect x="810.00" y="437.40" width="11.50" height="1.70" fill="#d6d6d6" />
<rect x="809.50" y="450.80" width="5.00" height="5.20" fill="#bdbdbd" />
<rect x="815.50" y="450.80" width="5.50" height="6.40" fill="none" stroke="#d0d0d0" stroke-width="1"/>
<line x1="802.00" y1="467.50" x2="828.00" y2="467.50" stroke="#454545" stroke-width="1.20" />
<rect x="807.00" y="471.00" width="1.00" height="1.40" fill="#434343" />
<rect x="809.00" y="471.00" width="1.00" height="1.40" fill="#434343" />
<rect x="811.00" y="471.00" width="1.00" height="1.40" fill="#434343" />
<rect x="813.00" y="471.00" width="1.00" height="1.40" fill="#434343" />
<rect x="815.00" y="471.00" width="1.00" height="1.40" fill="#434343" />
<rect x="817.00" y="471.00" width="1.00" height="1.40" fill="#434343" />
<rect x="819.00" y="471.00" width="1.00" height="1.40" fill="#434343" />
<rect x="821.00" y="471.00" width="1.00" height="1.40" fill="#434343" />
<rect x="810.00" y="479.00" width="11.50" height="1.70" fill="#d6d6d6" />
<rect x="810.00" y="482.20" width="11.50" height="1.70" fill="#d6d6d6" />
<rect x="810.00" y="485.40" width="11.50" height="1.70" fill="#d6d6d6" />
<path d="M831.8,402 c-2,3 -2.4,6 -2.2,10" fill="none" stroke="#c8c8c8" stroke-width="1.20" />
<path d="M831.8,450.5 c-2,3 -2.4,6 -2.2,10" fill="none" stroke="#c8c8c8" stroke-width="1.20" />
<rect x="830.00" y="47.50" width="170.00" height="9.00" fill="#474747" />
<path d="M990,50.2 l2,1.8 l-2,1.8 M993.2,50.2 l2,1.8 l-2,1.8" fill="none" stroke="#d0d0d0" stroke-width="1.00" />
<rect x="830.00" y="56.00" width="170.00" height="19.00" fill="#474747" />
<rect x="831.50" y="56.00" width="30.00" height="19.50" fill="#535353" />
<rect x="994.80" y="56.00" width="1.20" height="439.00" fill="#444444" />
<rect x="996.00" y="56.00" width="4.00" height="439.00" fill="#555555" />
<text x="846.50" y="69.60" font-size="9.60" fill="#f0f0f0" text-anchor="middle" textLength="19" lengthAdjust="spacingAndGlyphs">色板</text>
<text x="877.50" y="69.60" font-size="9.60" fill="#a4a4a4" text-anchor="middle" textLength="19" lengthAdjust="spacingAndGlyphs">颜色</text>
<text x="909.70" y="69.60" font-size="9.60" fill="#a4a4a4" text-anchor="middle" textLength="34" lengthAdjust="spacingAndGlyphs">颜色参考</text>
<text x="952.00" y="69.60" font-size="9.60" fill="#a4a4a4" text-anchor="middle" textLength="35" lengthAdjust="spacingAndGlyphs">路径查找</text>
<line x1="863.00" y1="58.00" x2="863.00" y2="74.00" stroke="#525252" stroke-width="0.80" />
<line x1="892.00" y1="58.00" x2="892.00" y2="74.00" stroke="#525252" stroke-width="0.80" />
<line x1="929.50" y1="58.00" x2="929.50" y2="74.00" stroke="#525252" stroke-width="0.80" />
<line x1="972.00" y1="58.00" x2="972.00" y2="74.00" stroke="#525252" stroke-width="0.80" />
<path d="M987.5,64.5 h7 M987.5,66.8 h7 M987.5,69.1 h7" fill="none" stroke="#bdbdbd" stroke-width="1.10" />
<rect x="842.60" y="90.50" width="12.00" height="11.00" fill="#fff" />
<line x1="842.60" y1="101.50" x2="854.60" y2="90.50" stroke="#e0202a" stroke-width="1.80"/>
<rect x="846.50" y="94.00" width="4.00" height="4.00" fill="#c4202c" />
<rect x="835.50" y="82.40" width="12.20" height="11.20" fill="#b9b9a3" stroke="#e0e0e0" stroke-width="0.7"/>
<rect x="964.00" y="84.50" width="10.00" height="2.00" fill="#d6d6d6" />
<rect x="964.00" y="88.10" width="10.00" height="2.00" fill="#d6d6d6" />
<rect x="964.00" y="91.70" width="10.00" height="2.00" fill="#d6d6d6" />
<rect x="978.80" y="81.40" width="15.80" height="15.20" fill="#2d2d2d" rx="1.2"/>
<rect x="981.60" y="84.00" width="2.80" height="2.80" fill="#e2e2e2" />
<rect x="985.30" y="84.00" width="2.80" height="2.80" fill="#e2e2e2" />
<rect x="989.00" y="84.00" width="2.80" height="2.80" fill="#e2e2e2" />
<rect x="981.60" y="87.70" width="2.80" height="2.80" fill="#e2e2e2" />
<rect x="985.30" y="87.70" width="2.80" height="2.80" fill="#e2e2e2" />
<rect x="989.00" y="87.70" width="2.80" height="2.80" fill="#e2e2e2" />
<rect x="981.60" y="91.40" width="2.80" height="2.80" fill="#e2e2e2" />
<rect x="985.30" y="91.40" width="2.80" height="2.80" fill="#e2e2e2" />
<rect x="989.00" y="91.40" width="2.80" height="2.80" fill="#e2e2e2" />
<rect x="835.00" y="106.60" width="9.87" height="10.02" fill="#fff" />
<line x1="835.00" y1="116.62" x2="844.87" y2="106.60" stroke="#e0202a" stroke-width="1.40"/>
<rect x="845.27" y="106.60" width="9.87" height="10.02" fill="#e4e4e4" />
<circle cx="850.20" cy="111.61" r="2.2" fill="none" stroke="#444" stroke-width="0.8"/>
<path d="M850.20,107.60 v8.02 M846.27,111.61 h7.87" fill="none" stroke="#444" stroke-width="0.70" />
<rect x="855.54" y="106.60" width="9.97" height="10.12" fill="#ffffff" />
<rect x="865.81" y="106.60" width="9.97" height="10.12" fill="#000000" />
<rect x="876.08" y="106.60" width="9.97" height="10.12" fill="#ff0000" />
<rect x="886.35" y="106.60" width="9.97" height="10.12" fill="#ffff00" />
<rect x="896.62" y="106.60" width="9.97" height="10.12" fill="#00ff00" />
<rect x="906.89" y="106.60" width="9.97" height="10.12" fill="#00ffff" />
<rect x="917.16" y="106.60" width="9.97" height="10.12" fill="#0000ff" />
<rect x="927.43" y="106.60" width="9.97" height="10.12" fill="#ff00ff" />
<rect x="937.70" y="106.60" width="9.97" height="10.12" fill="#c1272d" />
<rect x="947.97" y="106.60" width="9.97" height="10.12" fill="#ed1c24" />
<rect x="958.24" y="106.60" width="9.97" height="10.12" fill="#f15a24" />
<rect x="968.51" y="106.60" width="9.97" height="10.12" fill="#f7931e" />
<rect x="835.00" y="117.02" width="9.97" height="10.12" fill="#fbb03b" />
<rect x="845.27" y="117.02" width="9.97" height="10.12" fill="#fcee21" />
<rect x="855.54" y="117.02" width="9.97" height="10.12" fill="#d9e021" />
<rect x="865.81" y="117.02" width="9.97" height="10.12" fill="#8cc63f" />
<rect x="876.08" y="117.02" width="9.97" height="10.12" fill="#39b54a" />
<rect x="886.35" y="117.02" width="9.97" height="10.12" fill="#009245" />
<rect x="896.62" y="117.02" width="9.97" height="10.12" fill="#006837" />
<rect x="906.89" y="117.02" width="9.97" height="10.12" fill="#22b573" />
<rect x="917.16" y="117.02" width="9.97" height="10.12" fill="#00a99d" />
<rect x="927.43" y="117.02" width="9.97" height="10.12" fill="#29abe2" />
<rect x="937.70" y="117.02" width="9.97" height="10.12" fill="#0071bc" />
<rect x="947.97" y="117.02" width="9.97" height="10.12" fill="#2e3192" />
<rect x="958.24" y="117.02" width="9.97" height="10.12" fill="#1b1464" />
<rect x="968.51" y="117.02" width="9.97" height="10.12" fill="#662d91" />
<rect x="835.00" y="127.44" width="9.97" height="10.12" fill="#93278f" />
<rect x="845.27" y="127.44" width="9.97" height="10.12" fill="#9e005d" />
<rect x="855.54" y="127.44" width="9.97" height="10.12" fill="#d4145a" />
<rect x="865.81" y="127.44" width="9.97" height="10.12" fill="#ed1e79" />
<rect x="876.08" y="127.44" width="9.97" height="10.12" fill="#c7b299" />
<rect x="886.35" y="127.44" width="9.97" height="10.12" fill="#998675" />
<rect x="896.62" y="127.44" width="9.97" height="10.12" fill="#736357" />
<rect x="906.89" y="127.44" width="9.97" height="10.12" fill="#534741" />
<rect x="917.16" y="127.44" width="9.97" height="10.12" fill="#c69c6d" />
<rect x="927.43" y="127.44" width="9.97" height="10.12" fill="#a67c52" />
<rect x="937.70" y="127.44" width="9.97" height="10.12" fill="#8c6239" />
<rect x="947.97" y="127.44" width="9.97" height="10.12" fill="#754c24" />
<rect x="958.24" y="127.44" width="9.97" height="10.12" fill="#603813" />
<rect x="968.51" y="127.44" width="9.97" height="10.12" fill="#42210b" />
<linearGradient id="sg1" x1="0" y1="0" x2="1" y2="0"><stop offset="0" stop-color="#ffffff"/><stop offset="1" stop-color="#000000"/></linearGradient>
<linearGradient id="sg2" x1="0" y1="0" x2="1" y2="0"><stop offset="0" stop-color="#e8f4ff"/><stop offset="0.45" stop-color="#29abe2"/><stop offset="1" stop-color="#0060b0"/></linearGradient>
<linearGradient id="sg3" x1="0" y1="0" x2="1" y2="0"><stop offset="0" stop-color="#ffffff"/><stop offset="0.5" stop-color="#ff9ec0"/><stop offset="1" stop-color="#ff5f9a"/></linearGradient>
<radialGradient id="sg4"><stop offset="0" stop-color="#fff2a0"/><stop offset="0.6" stop-color="#fbb03b"/><stop offset="1" stop-color="#f7931e"/></radialGradient>
<rect x="835.00" y="137.86" width="9.97" height="10.12" fill="url(#sg1)" />
<rect x="845.27" y="137.86" width="9.97" height="10.12" fill="url(#sg2)" />
<rect x="855.54" y="137.86" width="9.97" height="10.12" fill="url(#sg3)" />
<rect x="865.81" y="137.86" width="9.97" height="10.12" fill="url(#sg4)" />
<rect x="876.08" y="137.86" width="9.97" height="10.12" fill="#ece8d8" />
<rect x="886.35" y="137.86" width="9.97" height="10.12" fill="#4f8fd0" />
<rect x="896.62" y="137.86" width="9.97" height="10.12" fill="#d8eadc" />
<path d="M887.4,138.9 l3,3 m2,-3 l3,3 m-8,3 l3,3 m2,-3 l3,3" fill="none" stroke="#bcd8f4" stroke-width="0.90" />
<path d="M897.6,138.9 l3,3 m2,-3 l3,3 m-8,3 l3,3" fill="none" stroke="#a8d0c0" stroke-width="0.80" />
<path d="M878.1,140.9 h6 m-6,3 h6" fill="none" stroke="#d4ccb0" stroke-width="0.80" />
<path d="M835.8,151.3 h3 l1,1.2 h4.4 v6 h-8.4z" fill="#cfcfcf" stroke="none" stroke-width="1.00" />
<rect x="845.27" y="149.48" width="9.97" height="10.12" fill="#000000" />
<rect x="855.54" y="149.48" width="9.97" height="10.12" fill="#1a1a1a" />
<rect x="865.81" y="149.48" width="9.97" height="10.12" fill="#333333" />
<rect x="876.08" y="149.48" width="9.97" height="10.12" fill="#4d4d4d" />
<rect x="886.35" y="149.48" width="9.97" height="10.12" fill="#666666" />
<rect x="896.62" y="149.48" width="9.97" height="10.12" fill="#808080" />
<rect x="906.89" y="149.48" width="9.97" height="10.12" fill="#999999" />
<rect x="917.16" y="149.48" width="9.97" height="10.12" fill="#b3b3b3" />
<rect x="927.43" y="149.48" width="9.97" height="10.12" fill="#cccccc" />
<rect x="937.70" y="149.48" width="9.97" height="10.12" fill="#e6e6e6" />
<rect x="947.97" y="149.48" width="9.97" height="10.12" fill="#f2f2f2" />
<path d="M835.8,162.7 h3 l1,1.2 h4.4 v6 h-8.4z" fill="#cfcfcf" stroke="none" stroke-width="1.00" />
<rect x="845.27" y="160.90" width="9.97" height="10.12" fill="#3fa9f5" />
<rect x="855.54" y="160.90" width="9.97" height="10.12" fill="#7ac943" />
<rect x="865.81" y="160.90" width="9.97" height="10.12" fill="#ff931e" />
<rect x="876.08" y="160.90" width="9.97" height="10.12" fill="#ff1d25" />
<rect x="886.35" y="160.90" width="9.97" height="10.12" fill="#ff7bac" />
<rect x="896.62" y="160.90" width="9.97" height="10.12" fill="#c7d4ea" />
<path d="M839,188.1 v7 M841.2,188.1 v7 M843,188.6 l2.2,6.6" fill="none" stroke="#d2d2d2" stroke-width="1.30" />
<path d="M846.5,193.8 l1.2,1.2 l1.2,-1.2" fill="none" stroke="#d2d2d2" stroke-width="0.80" />
<circle cx="860" cy="191.6" r="1.6" fill="#d2d2d2"/><circle cx="865" cy="188.6" r="1.5" fill="#d2d2d2"/><circle cx="865" cy="194.6" r="1.5" fill="#d2d2d2"/>
<path d="M860,191.6 L865,188.6 M860,191.6 L865,194.6" fill="none" stroke="#d2d2d2" stroke-width="0.90" />
<path d="M875.5,194.6 a2.5,2.5 0 0 1 2,-4 a3.2,3.2 0 0 1 6,0.6 a2,2 0 0 1 1.5,3.4z" fill="#6c6c6c" stroke="none" stroke-width="1.00" />
<rect x="893.50" y="187.60" width="2.90" height="2.90" fill="#d2d2d2" />
<rect x="897.30" y="187.60" width="2.90" height="2.90" fill="#d2d2d2" />
<rect x="893.50" y="191.40" width="2.90" height="2.90" fill="#d2d2d2" />
<rect x="897.30" y="191.40" width="2.90" height="2.90" fill="#d2d2d2" />
<path d="M901.8,193.8 l1.2,1.2 l1.2,-1.2" fill="none" stroke="#d2d2d2" stroke-width="0.80" />
<rect x="912.50" y="188.10" width="7.00" height="7.00" fill="none" stroke="#6c6c6c" stroke-width="1"/>
<path d="M931,187.8 h3.4 l1,1.2 h5.6 v6.2 h-10z" fill="#d2d2d2" stroke="none" stroke-width="1.00" />
<path d="M951.5,187.8 h7.5 v5 l-2.5,2.6 h-5z" fill="#d2d2d2" stroke="none" stroke-width="1.00" />
<path d="M971.5,189.2 h6 l-0.6,6.5 h-4.8z M970.8,188.2 h7.4 M973.3,187.0 h2.4" fill="none" stroke="#6c6c6c" stroke-width="1.00" />
<rect x="830.00" y="199.00" width="170.00" height="2.00" fill="#434343" />
<rect x="830.00" y="201.00" width="170.00" height="18.50" fill="#474747" />
<rect x="832.00" y="201.00" width="30.00" height="19.00" fill="#535353" />
<text x="847.00" y="214.30" font-size="9.60" fill="#f0f0f0" text-anchor="middle" textLength="19" lengthAdjust="spacingAndGlyphs">图层</text>
<text x="877.40" y="214.30" font-size="9.60" fill="#a4a4a4" text-anchor="middle" textLength="18" lengthAdjust="spacingAndGlyphs">画板</text>
<text x="908.50" y="214.30" font-size="9.60" fill="#a4a4a4" text-anchor="middle" textLength="18.5" lengthAdjust="spacingAndGlyphs">外观</text>
<line x1="863.50" y1="203.00" x2="863.50" y2="218.00" stroke="#525252" stroke-width="0.80" />
<line x1="892.00" y1="203.00" x2="892.00" y2="218.00" stroke="#525252" stroke-width="0.80" />
<line x1="925.00" y1="203.00" x2="925.00" y2="218.00" stroke="#525252" stroke-width="0.80" />
<path d="M987,208.2 h7 M987,210.5 h7 M987,212.8 h7" fill="none" stroke="#bdbdbd" stroke-width="1.10" />
<line x1="830.00" y1="224.48" x2="994.80" y2="224.48" stroke="#494949" stroke-width="1.00" />
<line x1="830.00" y1="239.91" x2="994.80" y2="239.91" stroke="#494949" stroke-width="1.00" />
<line x1="830.00" y1="255.34" x2="994.80" y2="255.34" stroke="#494949" stroke-width="1.00" />
<line x1="830.00" y1="270.77" x2="994.80" y2="270.77" stroke="#494949" stroke-width="1.00" />
<line x1="830.00" y1="286.20" x2="994.80" y2="286.20" stroke="#494949" stroke-width="1.00" />
<line x1="830.00" y1="301.63" x2="994.80" y2="301.63" stroke="#494949" stroke-width="1.00" />
<line x1="830.00" y1="317.06" x2="994.80" y2="317.06" stroke="#494949" stroke-width="1.00" />
<line x1="830.00" y1="332.50" x2="994.80" y2="332.50" stroke="#494949" stroke-width="1.00" />
<line x1="830.00" y1="347.92" x2="994.80" y2="347.92" stroke="#494949" stroke-width="1.00" />
<line x1="830.00" y1="363.36" x2="994.80" y2="363.36" stroke="#494949" stroke-width="1.00" />
<line x1="852.50" y1="224.50" x2="852.50" y2="364.00" stroke="#4c4c4c" stroke-width="0.80" />
<line x1="862.60" y1="224.50" x2="862.60" y2="364.00" stroke="#4c4c4c" stroke-width="0.80" />
<line x1="969.00" y1="224.50" x2="969.00" y2="364.00" stroke="#4a4a4a" stroke-width="1.00" stroke-dasharray="1.5,1.5"/>
<line x1="984.50" y1="224.50" x2="984.50" y2="364.00" stroke="#4c4c4c" stroke-width="0.80" />
<path d="M838.30,231.90 q4.3,-5.6 8.6,0 q-4.3,5.6 -8.6,0z" fill="#cfcfcf" stroke="none" stroke-width="1.00" />
<circle cx="842.60" cy="231.90" r="1.7" fill="#535353"/><circle cx="842.60" cy="231.90" r="0.8" fill="#cfcfcf"/>
<circle cx="976.3" cy="232.80" r="3.1" fill="none" stroke="#d4d4d4" stroke-width="1.7"/>
<rect x="866.00" y="225.18" width="3.60" height="14.43" fill="#55c465" rx="1.4"/>
<path d="M838.30,247.33 q4.3,-5.6 8.6,0 q-4.3,5.6 -8.6,0z" fill="#cfcfcf" stroke="none" stroke-width="1.00" />
<circle cx="842.60" cy="247.33" r="1.7" fill="#535353"/><circle cx="842.60" cy="247.33" r="0.8" fill="#cfcfcf"/>
<circle cx="976.3" cy="248.23" r="3.1" fill="none" stroke="#d4d4d4" stroke-width="1.7"/>
<rect x="866.00" y="240.61" width="3.60" height="14.43" fill="#55c465" rx="1.4"/>
<path d="M838.30,262.76 q4.3,-5.6 8.6,0 q-4.3,5.6 -8.6,0z" fill="#cfcfcf" stroke="none" stroke-width="1.00" />
<circle cx="842.60" cy="262.76" r="1.7" fill="#535353"/><circle cx="842.60" cy="262.76" r="0.8" fill="#cfcfcf"/>
<circle cx="976.3" cy="263.66" r="3.1" fill="none" stroke="#d4d4d4" stroke-width="1.7"/>
<rect x="866.00" y="256.05" width="3.60" height="14.43" fill="#55c465" rx="1.4"/>
<path d="M838.30,278.19 q4.3,-5.6 8.6,0 q-4.3,5.6 -8.6,0z" fill="#cfcfcf" stroke="none" stroke-width="1.00" />
<circle cx="842.60" cy="278.19" r="1.7" fill="#535353"/><circle cx="842.60" cy="278.19" r="0.8" fill="#cfcfcf"/>
<circle cx="976.3" cy="279.09" r="3.1" fill="none" stroke="#d4d4d4" stroke-width="1.7"/>
<rect x="866.00" y="271.48" width="3.60" height="14.43" fill="#55c465" rx="1.4"/>
<path d="M838.30,293.62 q4.3,-5.6 8.6,0 q-4.3,5.6 -8.6,0z" fill="#cfcfcf" stroke="none" stroke-width="1.00" />
<circle cx="842.60" cy="293.62" r="1.7" fill="#535353"/><circle cx="842.60" cy="293.62" r="0.8" fill="#cfcfcf"/>
<circle cx="976.3" cy="294.52" r="3.1" fill="none" stroke="#d4d4d4" stroke-width="1.7"/>
<rect x="866.00" y="286.90" width="3.60" height="14.43" fill="#55c465" rx="1.4"/>
<path d="M838.30,309.05 q4.3,-5.6 8.6,0 q-4.3,5.6 -8.6,0z" fill="#cfcfcf" stroke="none" stroke-width="1.00" />
<circle cx="842.60" cy="309.05" r="1.7" fill="#535353"/><circle cx="842.60" cy="309.05" r="0.8" fill="#cfcfcf"/>
<circle cx="976.3" cy="309.95" r="3.1" fill="none" stroke="#d4d4d4" stroke-width="1.7"/>
<rect x="866.00" y="302.34" width="3.60" height="14.43" fill="#55c465" rx="1.4"/>
<path d="M838.30,324.48 q4.3,-5.6 8.6,0 q-4.3,5.6 -8.6,0z" fill="#cfcfcf" stroke="none" stroke-width="1.00" />
<circle cx="842.60" cy="324.48" r="1.7" fill="#535353"/><circle cx="842.60" cy="324.48" r="0.8" fill="#cfcfcf"/>
<circle cx="976.3" cy="325.38" r="3.1" fill="none" stroke="#d4d4d4" stroke-width="1.7"/>
<rect x="866.00" y="317.76" width="3.60" height="14.43" fill="#55c465" rx="1.4"/>
<circle cx="976.3" cy="340.81" r="3.1" fill="none" stroke="#d4d4d4" stroke-width="1.7"/>
<path d="M838.30,355.34 q4.3,-5.6 8.6,0 q-4.3,5.6 -8.6,0z" fill="#cfcfcf" stroke="none" stroke-width="1.00" />
<circle cx="842.60" cy="355.34" r="1.7" fill="#535353"/><circle cx="842.60" cy="355.34" r="0.8" fill="#cfcfcf"/>
<circle cx="976.3" cy="356.24" r="3.1" fill="none" stroke="#d4d4d4" stroke-width="1.7"/>
<rect x="864.80" y="333.01" width="6.00" height="14.40" fill="#4c6ec2" rx="2.8"/>
<rect x="864.80" y="348.44" width="6.00" height="14.40" fill="#cc5454" rx="2.8"/>
<rect x="854.80" y="339.71" width="5.60" height="4.60" fill="#cfcfcf" rx="0.6"/>
<path d="M855.90,339.91 v-1.6 a1.7,1.7 0 0 1 3.4,0 v1.6" fill="none" stroke="#cfcfcf" stroke-width="1.10" />
<rect x="854.80" y="355.14" width="5.60" height="4.60" fill="#cfcfcf" rx="0.6"/>
<path d="M855.90,355.34 v-1.6 a1.7,1.7 0 0 1 3.4,0 v1.6" fill="none" stroke="#cfcfcf" stroke-width="1.10" />
<path d="M875.40,231.30 L877.90,234.10 L880.40,231.30" fill="none" stroke="#d8d8d8" stroke-width="1.30" stroke-linecap="round" stroke-linejoin="round"/>
<path d="M875.50,337.71 L878.30,340.21 L875.50,342.71" fill="none" stroke="#d8d8d8" stroke-width="1.30" stroke-linecap="round" stroke-linejoin="round"/>
<path d="M875.50,353.14 L878.30,355.64 L875.50,358.14" fill="none" stroke="#d8d8d8" stroke-width="1.30" stroke-linecap="round" stroke-linejoin="round"/>
<rect x="888.40" y="225.50" width="12.60" height="13.60" fill="#deded0" />
<ellipse cx="892.2" cy="233.5" rx="1.9" ry="1.7" fill="#000"/><ellipse cx="897.6" cy="233.5" rx="1.9" ry="1.7" fill="#000"/>
<text x="905.40" y="237.30" font-size="9.80" fill="#e6e6e6" text-anchor="start" textLength="26" lengthAdjust="spacingAndGlyphs">图层 3</text>
<path d="M990.5,224.8 h5.5 v5.5z" fill="#e8e8e8" stroke="none" stroke-width="1.00" />
<rect x="905.40" y="241.53" width="12.20" height="12.40" fill="#ffffff" />
<ellipse cx="911.50" cy="247.83" rx="6.3" ry="4.9" fill="#000" transform="rotate(-18 911.50 247.83)"/>
<text x="921.50" y="252.03" font-size="10.00" fill="#9c9c9c" text-anchor="start" textLength="12" lengthAdjust="spacing" font-weight="bold">...</text>
<rect x="905.40" y="256.96" width="12.20" height="12.40" fill="#ffffff" />
<text x="921.50" y="267.46" font-size="10.00" fill="#9c9c9c" text-anchor="start" textLength="12" lengthAdjust="spacing" font-weight="bold">...</text>
<rect x="905.40" y="272.39" width="12.20" height="12.40" fill="#ffffff" />
<ellipse cx="911.50" cy="278.69" rx="6.3" ry="4.9" fill="#000" transform="rotate(-18 911.50 278.69)"/>
<text x="921.50" y="282.89" font-size="10.00" fill="#9c9c9c" text-anchor="start" textLength="12" lengthAdjust="spacing" font-weight="bold">...</text>
<rect x="905.40" y="287.82" width="12.20" height="12.40" fill="#ffffff" />
<text x="921.50" y="298.32" font-size="10.00" fill="#9c9c9c" text-anchor="start" textLength="12" lengthAdjust="spacing" font-weight="bold">...</text>
<rect x="905.40" y="303.25" width="12.20" height="12.40" fill="#ffffff" />
<rect x="906.60" y="304.45" width="9.80" height="10.00" fill="#bcbca6" />
<text x="921.50" y="313.75" font-size="10.00" fill="#9c9c9c" text-anchor="start" textLength="12" lengthAdjust="spacing" font-weight="bold">...</text>
<rect x="905.40" y="318.68" width="12.20" height="12.40" fill="#ffffff" />
<text x="921.50" y="329.18" font-size="10.00" fill="#9c9c9c" text-anchor="start" textLength="12" lengthAdjust="spacing" font-weight="bold">...</text>
<rect x="888.40" y="333.91" width="12.60" height="12.40" fill="#000" />
<rect x="888.40" y="333.91" width="12.60" height="2.20" fill="#fff" />
<rect x="888.40" y="343.61" width="12.60" height="2.70" fill="#fff" />
<path d="M893,342.81 h3.6 M894,342.81 v-3 h1.6 v3" fill="none" stroke="#e6c88c" stroke-width="1.00" />
<text x="905.40" y="344.41" font-size="9.80" fill="#c4c4c4" text-anchor="start" textLength="26" lengthAdjust="spacingAndGlyphs">图层 1</text>
<rect x="888.40" y="349.04" width="12.60" height="13.00" fill="#fff" />
<rect x="888.40" y="352.24" width="12.60" height="6.00" fill="#000" />
<text x="905.40" y="359.84" font-size="9.80" fill="#c4c4c4" text-anchor="start" textLength="26" lengthAdjust="spacingAndGlyphs">图层 2</text>
<rect x="830.00" y="364.60" width="164.80" height="1.20" fill="#474747" />
<rect x="769.50" y="412.50" width="1.60" height="1.20" fill="#3a3a3a" />
<rect x="768.60" y="462.00" width="1.00" height="3.40" fill="#333333" />
</svg>
</body></html>
